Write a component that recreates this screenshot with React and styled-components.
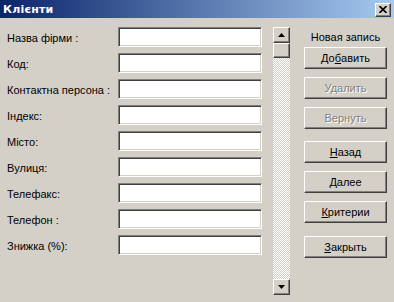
import React from "react";
import styled, { createGlobalStyle } from "styled-components";

const GlobalStyle = createGlobalStyle`
  html, body {
    margin: 0;
    padding: 0;
    background: #d4d0c8;
    overflow: hidden;
  }
  body {
    font-family: "Liberation Sans", Arial, sans-serif;
    font-size: 11px;
    color: #000;
  }
`;

const Window = styled.div`
  width: 394px;
  height: 302px;
  display: flex;
  flex-direction: column;
  background: #d4d0c8;
`;

const TitleBar = styled.div`
  height: 18px;
  display: flex;
  align-items: center;
  justify-content: space-between;
  padding: 0 3px 0 3px;
  background: linear-gradient(to right, #0a246a, #a6caf0);
`;

const Title = styled.span`
  color: #fff;
  font-family: "DejaVu Sans", sans-serif;
  font-weight: bold;
  font-size: 11px;
  letter-spacing: 0.2px;
`;

const raised = `
  background: #d4d0c8;
  border: 1px solid;
  border-color: #fff #404040 #404040 #fff;
  box-shadow: inset -1px -1px #808080, inset 1px 1px #d4d0c8;
  box-sizing: border-box;
`;

const CloseButton = styled.div`
  ${raised}
  width: 16px;
  height: 14px;
  display: flex;
  align-items: center;
  justify-content: center;
  margin-top: 1px;
`;

const Content = styled.div`
  display: flex;
  padding: 9px 0 0 7px;
  flex: 1;
`;

const Form = styled.div`
  display: grid;
  grid-template-columns: 111px 144px;
  grid-auto-rows: 20px;
  row-gap: 6px;
  align-items: center;
`;

const Label = styled.label`
  white-space: nowrap;
  padding-top: 1px;
`;

const Input = styled.div`
  height: 20px;
  box-sizing: border-box;
  background: #fff;
  border: 1px solid;
  border-color: #808080 #fff #fff #808080;
  box-shadow: inset 1px 1px #404040, inset -1px -1px #d4d0c8;
`;

const ScrollBar = styled.div`
  margin-left: 11px;
  width: 17px;
  height: 268px;
  display: flex;
  flex-direction: column;
`;

const ScrollButton = styled.div`
  ${raised}
  width: 17px;
  height: 16px;
  display: flex;
  align-items: center;
  justify-content: center;
`;

const Thumb = styled.div`
  ${raised}
  width: 17px;
  height: 15px;
`;

const Track = styled.div`
  flex: 1;
  background-image: conic-gradient(#fff 25%, #d4d0c8 0 50%, #fff 0 75%, #d4d0c8 0);
  background-size: 2px 2px;
`;

const Actions = styled.div`
  margin-left: 14px;
  width: 83px;
  display: flex;
  flex-direction: column;
`;

const Caption = styled.div`
  height: 20px;
  line-height: 20px;
  text-align: center;
  white-space: nowrap;
`;

const Button = styled.div`
  ${raised}
  height: 22px;
  margin-top: ${(p) => p.$gap}px;
  display: flex;
  align-items: center;
  justify-content: center;
  color: ${(p) => (p.$disabled ? "#808080" : "#000")};
  text-shadow: ${(p) => (p.$disabled ? "1px 1px #fff" : "none")};
`;

const fields = [
  "Назва фірми :",
  "Код:",
  "Контактна персона :",
  "Індекс:",
  "Місто:",
  "Вулиця:",
  "Телефакс:",
  "Телефон :",
  "Знижка (%):",
];

const Arrow = ({ down }) => (
  <svg width="7" height="4" viewBox="0 0 7 4">
    <polygon points={down ? "0,0 7,0 3.5,4" : "0,4 7,4 3.5,0"} fill="#000" />
  </svg>
);

export default function App() {
  return (
    <Window>
      <GlobalStyle />
      <TitleBar>
        <Title>Клієнти</Title>
        <CloseButton>
          <svg width="8" height="7" viewBox="0 0 8 7">
            <path d="M0.5 0 L7.5 7 M7.5 0 L0.5 7" stroke="#000" strokeWidth="1.6" />
          </svg>
        </CloseButton>
      </TitleBar>
      <Content>
        <Form>
          {fields.map((f) => (
            <React.Fragment key={f}>
              <Label>{f}</Label>
              <Input />
            </React.Fragment>
          ))}
        </Form>
        <ScrollBar>
          <ScrollButton>
            <Arrow />
          </ScrollButton>
          <Thumb />
          <Track />
          <ScrollButton>
            <Arrow down />
          </ScrollButton>
        </ScrollBar>
        <Actions>
          <Caption>Новая запись</Caption>
          <Button $gap={0}>
            До<u>б</u>авить
          </Button>
          <Button $gap={8} $disabled>
            Удалить
          </Button>
          <Button $gap={8} $disabled>
            Вернуть
          </Button>
          <Button $gap={12}>
            <u>Н</u>азад
          </Button>
          <Button $gap={8}>
            <u>Д</u>алее
          </Button>
          <Button $gap={8}>
            <u>К</u>ритерии
          </Button>
          <Button $gap={13}>
            <u>З</u>акрыть
          </Button>
        </Actions>
      </Content>
    </Window>
  );
}
